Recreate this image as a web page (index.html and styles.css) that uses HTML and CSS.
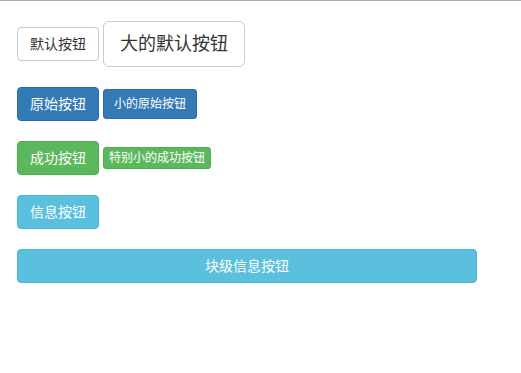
FILE: index.html
```html
<!DOCTYPE html>
<html lang="zh-CN">
<head>
    <meta charset="UTF-8">
    <meta name="viewport" content="width=device-width, initial-scale=1.0">
    <title>按钮示例</title>
    <link rel="stylesheet" href="styles.css">
</head>
<body>
    <div class="container">
        <div class="row">
            <button class="btn btn-default">默认按钮</button>
            <button class="btn btn-default btn-lg">大的默认按钮</button>
        </div>

        <div class="row">
            <button class="btn btn-primary">原始按钮</button>
            <button class="btn btn-primary btn-sm">小的原始按钮</button>
        </div>

        <div class="row">
            <button class="btn btn-success">成功按钮</button>
            <button class="btn btn-success btn-xs">特别小的成功按钮</button>
        </div>

        <div class="row">
            <button class="btn btn-info">信息按钮</button>
        </div>

        <div class="row">
            <button class="btn btn-info btn-block">块级信息按钮</button>
        </div>
    </div>
</body>
</html>
```

FILE: styles.css
```css
body {
    margin: 0;
    border-top: 1px solid #a9a9a9;
    font-family: 'Liberation Sans', 'Noto Sans CJK SC', sans-serif;
    font-size: 14px;
    color: #333;
    background: #fff;
}

.container {
    width: 460px;
    padding: 20px 17px;
}

.row {
    display: flex;
    align-items: center;
    gap: 4px;
    margin-bottom: 20px;
}

.btn {
    display: inline-block;
    margin: 0;
    padding: 6px 12px;
    font-family: inherit;
    font-size: 14px;
    line-height: 20px;
    text-align: center;
    white-space: nowrap;
    border: 1px solid transparent;
    border-radius: 4px;
    cursor: pointer;
}

.btn-lg {
    padding: 10px 16px;
    font-size: 18px;
    line-height: 24px;
    border-radius: 6px;
}

.btn-sm {
    padding: 5px 10px;
    font-size: 12px;
    line-height: 18px;
    border-radius: 3px;
}

.btn-xs {
    padding: 1px 5px;
    font-size: 12px;
    line-height: 18px;
    border-radius: 3px;
}

.btn-block {
    display: block;
    width: 100%;
}

.btn-default {
    color: #333;
    background: #fff;
    border-color: #ccc;
}

.btn-primary {
    color: #fff;
    background: #337ab7;
    border-color: #2e6da4;
}

.btn-success {
    color: #fff;
    background: #5cb85c;
    border-color: #4cae4c;
}

.btn-info {
    color: #fff;
    background: #5bc0de;
    border-color: #46b8da;
}
```
